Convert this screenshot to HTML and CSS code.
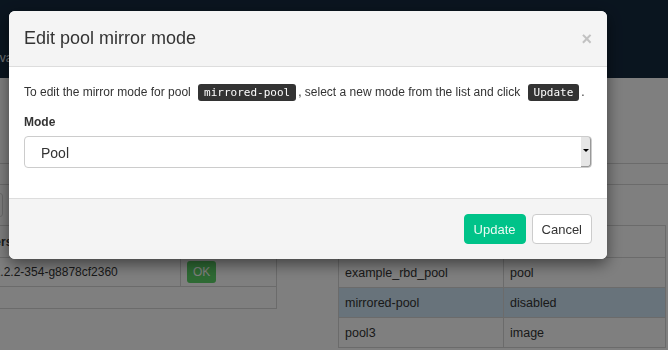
FILE: index.html
```html
<!DOCTYPE html>
<html lang="en">
<head>
  <meta charset="UTF-8">
  <meta name="viewport" content="width=device-width, initial-scale=1">
  <title>RBD Mirroring</title>
  <link rel="stylesheet" href="styles.css">
</head>

<body>
  <header class="navbar">
    <span class="nav-link">Java</span>
  </header>

  <div class="tabs"></div>
  <div class="toolbar"><span class="search-box"></span></div>

  <main class="content">
    <div class="panel panel-left">
      <table class="table daemons">
        <thead>
          <tr><th>Version</th><th>Health</th></tr>
        </thead>
        <tbody>
          <tr><td>12.2.2-354-g8878cf2360</td><td><span class="badge">OK</span></td></tr>
          <tr class="footer-row"><td colspan="2"></td></tr>
        </tbody>
      </table>
    </div>

    <div class="panel panel-right">
      <table class="table pools">
        <thead>
          <tr><th>Name</th><th>Mode</th></tr>
        </thead>
        <tbody>
          <tr><td>example_rbd_pool</td><td>pool</td></tr>
          <tr class="selected"><td>mirrored-pool</td><td>disabled</td></tr>
          <tr><td>pool3</td><td>image</td></tr>
        </tbody>
      </table>
    </div>
  </main>

  <div class="backdrop"></div>

  <div class="modal">
    <div class="modal-header">
      <h4 class="modal-title">Edit pool mirror mode</h4>
      <span class="close">&times;</span>
    </div>

    <div class="modal-body">
      <p>To edit the mirror mode for pool <code>mirrored-pool</code>, select a new mode from the list and click <code>Update</code>.</p>

      <div class="form-group">
        <label for="mirrorMode">Mode</label>
        <div class="select-wrap">
          <select id="mirrorMode" class="form-control">
            <option>Pool</option>
            <option>Image</option>
            <option>Disabled</option>
          </select>
          <span class="select-arrow"></span>
        </div>
      </div>
    </div>

    <div class="modal-footer">
      <button class="btn btn-primary">Update</button>
      <button class="btn btn-default">Cancel</button>
    </div>
  </div>
</body>
</html>
```

FILE: styles.css
```css
* {
  box-sizing: border-box;
}
body {
  margin: 0;
  font-family: "Liberation Sans", Arial, sans-serif;
  font-size: 12px;
  color: #333;
  background: #fff;
  overflow: hidden;
}

/* page behind the dialog */
.navbar {
  height: 78px;
  background: #152a3f;
  padding-top: 51px;
}
.nav-link {
  display: inline-block;
  margin-left: -13px;
  color: #e2e6ea;
  line-height: 14px;
}
.tabs {
  margin-top: 85px;
  height: 22px;
  border-top: 1px solid #d6d6d6;
  border-bottom: 1px solid #d6d6d6;
}
.toolbar {
  margin: 8px 0 0 -40px;
  height: 24px;
}
.search-box {
  display: inline-block;
  width: 43px;
  height: 24px;
  border: 1px solid #d6d6d6;
  border-radius: 3px;
}
.content {
  display: flex;
  margin: 8px 0 0 -20px;
}
.panel-left {
  width: 297px;
}
.panel-right {
  width: 328px;
  margin-left: 61px;
}
.table {
  width: 100%;
  border-collapse: collapse;
  font-size: 12.5px;
}
.table th,
.table td {
  border: 1px solid #d6d6d6;
  padding: 0 6px;
  text-align: left;
}
.table th {
  height: 32px;
  font-size: 12px;
}
.table td {
  height: 30px;
}
.daemons {
  font-size: 12px;
}
.daemons td {
  height: 29px;
}
.daemons th:first-child {
  width: 200px;
}
.daemons .footer-row td {
  height: 22px;
}
.pools th:first-child {
  width: 165px;
}
.selected td {
  background: #d0e6f6;
}
.badge {
  display: inline-block;
  height: 22px;
  line-height: 22px;
  padding: 0 6px;
  border-radius: 3px;
  background: #5cd468;
  color: #fff;
  font-size: 12px;
}

/* dialog */
.backdrop {
  position: fixed;
  inset: 0;
  background: rgba(0, 0, 0, 0.5);
}
.modal {
  position: fixed;
  top: 11px;
  left: 9px;
  width: 598px;
  background: #fff;
  border-radius: 6px;
  box-shadow: 0 5px 15px rgba(0, 0, 0, 0.5);
  overflow: hidden;
}
.modal-header {
  display: flex;
  justify-content: space-between;
  align-items: center;
  padding: 15px;
  background: #f4f4f4;
  border-bottom: 1px solid #ddd;
}
.modal-title {
  margin: 0;
  font-size: 18px;
  font-weight: normal;
  line-height: 25px;
  color: #333;
}
.close {
  font-size: 18px;
  font-weight: bold;
  line-height: 1;
  color: #c2c2c2;
  cursor: pointer;
}
.modal-body {
  padding: 15px;
}
.modal-body p {
  margin: 0 0 10px;
  line-height: 20px;
}
code {
  font-family: "DejaVu Sans Mono", monospace;
  font-size: 11px;
  background: #333;
  color: #fff;
  border-radius: 3px;
  padding: 2px 6px;
  margin: 0 2px 0 4px;
}
label {
  display: block;
  font-weight: bold;
  line-height: 18px;
  margin-bottom: 5px;
}
.form-group {
  margin-bottom: 15px;
}
.select-wrap {
  position: relative;
}
.form-control {
  display: block;
  width: 100%;
  height: 32px;
  padding: 1px 0 0 16px;
  border: 1px solid #ccc;
  border-radius: 4px;
  background: #fff;
  color: #333;
  font-family: inherit;
  font-size: 14px;
  appearance: none;
  -webkit-appearance: none;
}
.select-arrow {
  position: absolute;
  top: 1px;
  right: 1px;
  width: 10px;
  height: 30px;
  background: #e6e6e6;
  border-right: 1px solid #999;
  border-bottom: 1px solid #999;
  border-radius: 0 3px 3px 0;
}
.select-arrow::after {
  content: "";
  position: absolute;
  top: 12px;
  left: 2px;
  border-left: 3px solid transparent;
  border-right: 3px solid transparent;
  border-top: 3px solid #000;
}
.modal-footer {
  display: flex;
  justify-content: flex-end;
  gap: 6px;
  padding: 15px;
  background: #f4f4f4;
  border-top: 1px solid #ddd;
}
.btn {
  height: 30px;
  padding: 0 9px;
  font-family: inherit;
  font-size: 13px;
  border-radius: 4px;
  cursor: pointer;
}
.btn-primary {
  background: #00c389;
  border: 1px solid #00c389;
  color: #eafaf3;
}
.btn-default {
  background: #fff;
  border: 1px solid #ccc;
  color: #333;
}
```
